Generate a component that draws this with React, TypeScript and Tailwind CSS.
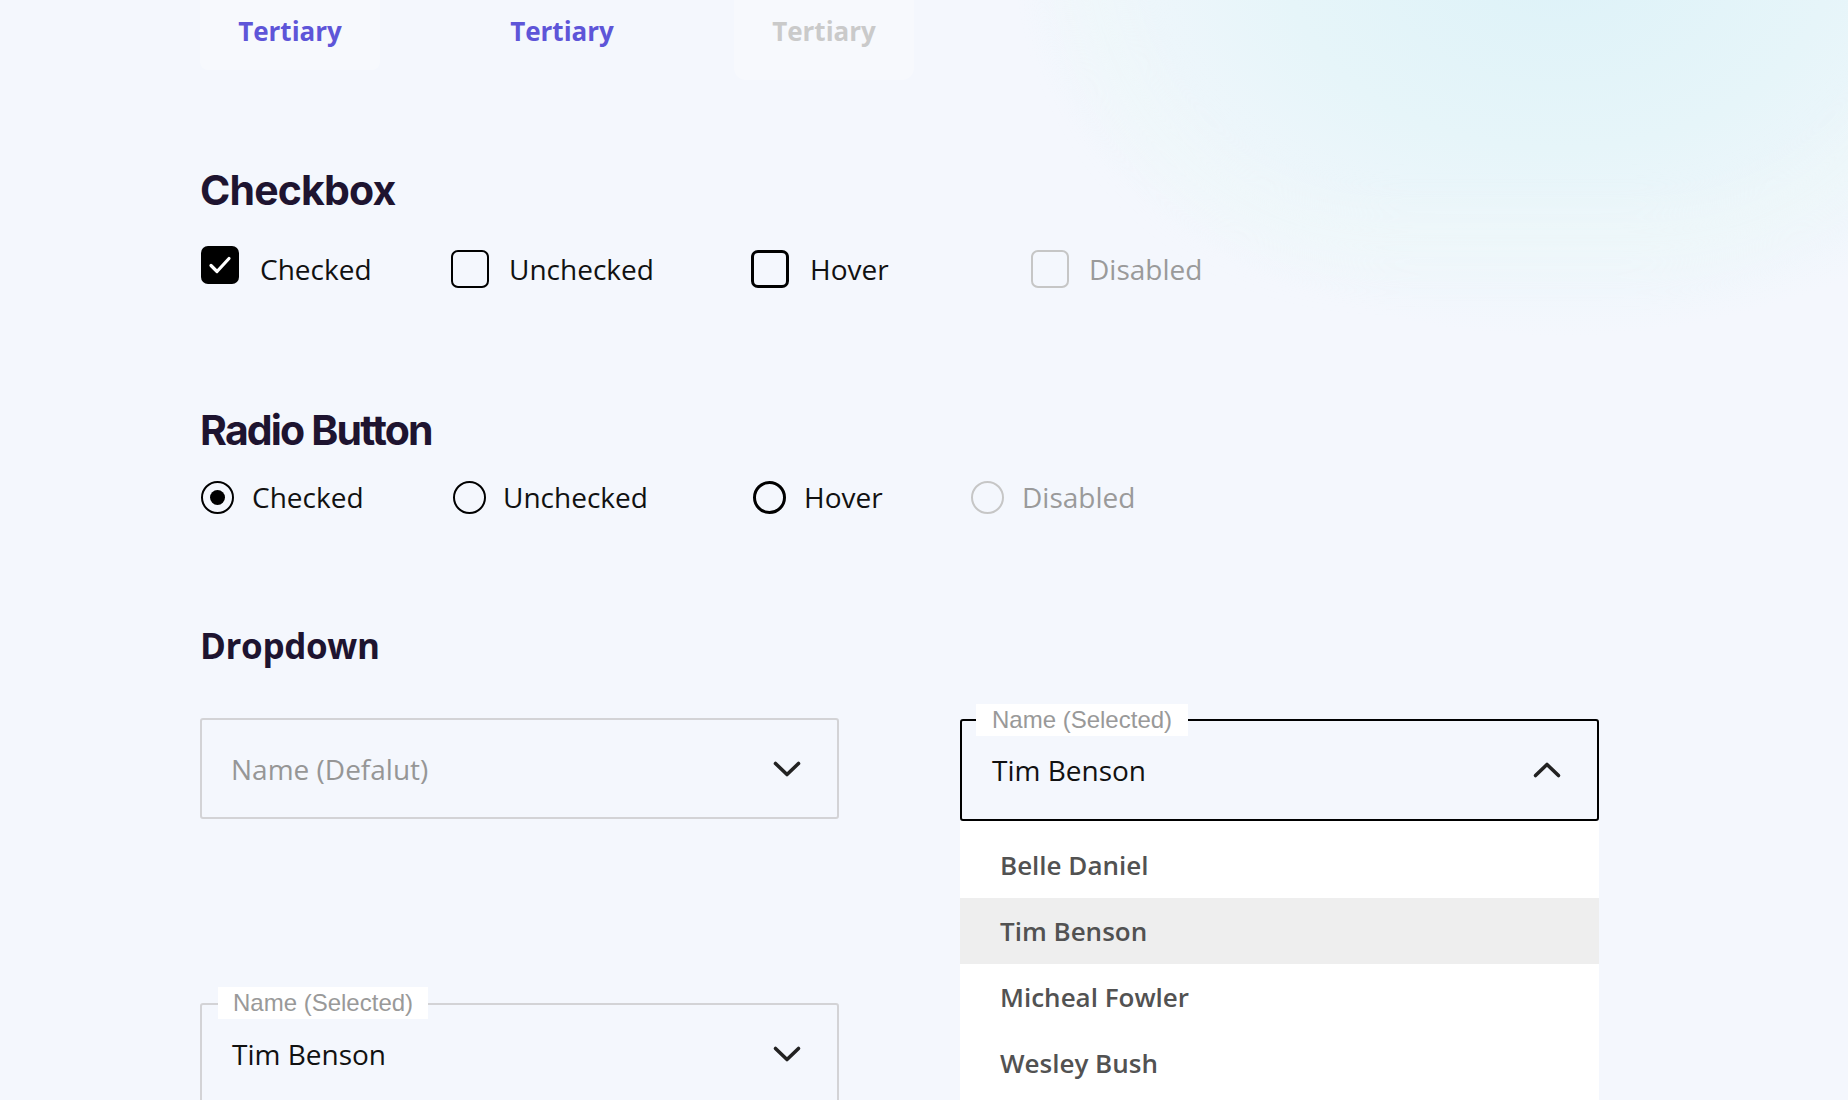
import React from "react";

const OPEN = { fontFamily: '"Open Sans", "Noto Sans", sans-serif' };
const INTER = { fontFamily: 'Inter, "Noto Sans", sans-serif' };
const ARIAL = { fontFamily: '"Liberation Sans", Arial, sans-serif' };

function ChevronDown() {
  return (
    <svg width="30" height="18" viewBox="0 0 30 18" fill="none">
      <path d="M3.5 3.5 L15 14.5 L26.5 3.5" stroke="#222" strokeWidth="3.6" strokeLinecap="round" strokeLinejoin="round" />
    </svg>
  );
}
function ChevronUp() {
  return (
    <svg width="30" height="18" viewBox="0 0 30 18" fill="none">
      <path d="M3.5 14.5 L15 3.5 L26.5 14.5" stroke="#222" strokeWidth="3.6" strokeLinecap="round" strokeLinejoin="round" />
    </svg>
  );
}

function Heading({ children, font }: { children: React.ReactNode; font: React.CSSProperties }) {
  return (
    <h2 className="h-[48px] leading-[48px] text-[#1e1430]" style={font}>
      {children}
    </h2>
  );
}

export default function App() {
  return (
    <div className="relative min-h-[1100px] w-full overflow-hidden bg-[#f4f7fd]" style={OPEN}>
      {/* decorative background glow */}
      <div className="pointer-events-none absolute right-[-260px] top-[-420px] h-[760px] w-[1100px] rounded-full bg-[radial-gradient(ellipse_at_center,#ddf2f8_0%,#e6f5f9_35%,rgba(244,247,253,0)_70%)]" />
      <div className="pointer-events-none absolute right-[-120px] top-[-380px] h-[640px] w-[900px] rounded-full border-[40px] border-[#eef8f8]/60 blur-xl" />

      <div className="relative pl-[200px]">
        {/* Tertiary buttons */}
        <div className="flex h-[80px] items-start">
          <div className="flex h-[70px] w-[180px] justify-center rounded-b-lg bg-white/30 pt-[13px]">
            <span className="text-[26px] font-bold leading-[36px] text-[#5e55d8]">Tertiary</span>
          </div>
          <div className="ml-[92px] flex h-[70px] w-[180px] justify-center pt-[13px]">
            <span className="text-[26px] font-bold leading-[36px] text-[#5e55d8]">Tertiary</span>
          </div>
          <div className="ml-[82px] flex h-[80px] w-[180px] justify-center rounded-b-xl bg-white/30 pt-[13px]">
            <span className="text-[26px] font-bold leading-[36px] text-[#cacaca]">Tertiary</span>
          </div>
        </div>

        {/* Checkbox */}
        <div className="mt-[86px]">
          <Heading font={INTER}>
            <span className="text-[41px] font-bold tracking-[-0.02em]">Checkbox</span>
          </Heading>
        </div>
        <div className="mt-[35px] flex h-[40px] items-center">
          <div className="flex w-[251px] items-center">
            <div className="ml-[1px] flex h-[38px] w-[38px] -translate-y-1 items-center justify-center rounded-[7px] bg-black">
              <svg width="24" height="20" viewBox="0 0 24 20" fill="none">
                <path d="M3 10.5 L9 16.5 L21 3.5" stroke="#fff" strokeWidth="3.2" strokeLinecap="round" strokeLinejoin="round" />
              </svg>
            </div>
            <span className="ml-[21px] text-[28px] leading-[40px] text-[#111]">Checked</span>
          </div>
          <div className="flex w-[300px] items-center">
            <div className="h-[38px] w-[38px] rounded-[7px] border-2 border-black" />
            <span className="ml-[20px] text-[28px] leading-[40px] text-[#111]">Unchecked</span>
          </div>
          <div className="flex w-[280px] items-center">
            <div className="h-[38px] w-[38px] rounded-[7px] border-[3.5px] border-black" />
            <span className="ml-[21px] text-[28px] leading-[40px] text-[#111]">Hover</span>
          </div>
          <div className="flex items-center">
            <div className="h-[38px] w-[38px] rounded-[7px] border-2 border-[#c6c6c6]" />
            <span className="ml-[20px] text-[28px] leading-[40px] text-[#9a9a9a]">Disabled</span>
          </div>
        </div>

        {/* Radio */}
        <div className="mt-[117px]">
          <Heading font={INTER}>
            <span className="text-[41px] font-bold tracking-[-0.045em]">Radio Button</span>
          </Heading>
        </div>
        <div className="mt-[23px] flex h-[40px] items-center">
          <div className="flex w-[253px] items-center">
            <div className="ml-[1px] flex h-[33px] w-[33px] items-center justify-center rounded-full border-2 border-black">
              <div className="h-[15px] w-[15px] rounded-full bg-black" />
            </div>
            <span className="ml-[18px] text-[28px] leading-[40px] text-[#111]">Checked</span>
          </div>
          <div className="flex w-[300px] items-center">
            <div className="h-[33px] w-[33px] rounded-full border-2 border-black" />
            <span className="ml-[17px] text-[28px] leading-[40px] text-[#111]">Unchecked</span>
          </div>
          <div className="flex w-[218px] items-center">
            <div className="h-[33px] w-[33px] rounded-full border-[3.5px] border-black" />
            <span className="ml-[18px] text-[28px] leading-[40px] text-[#111]">Hover</span>
          </div>
          <div className="flex items-center">
            <div className="h-[33px] w-[33px] rounded-full border-2 border-[#c6c6c6]" />
            <span className="ml-[18px] text-[28px] leading-[40px] text-[#9a9a9a]">Disabled</span>
          </div>
        </div>

        {/* Dropdown */}
        <div className="mt-[105px]">
          <Heading font={OPEN}>
            <span className="text-[35px] font-bold tracking-[-0.01em]">Dropdown</span>
          </Heading>
        </div>
        <div className="mt-[48px] flex gap-[121px]">
          {/* left column */}
          <div className="flex w-[639px] flex-col">
            <div className="flex h-[101px] items-center justify-between rounded-[3px] border-2 border-[#d3d3d6] pl-[29px] pr-[35px]">
              <span className="text-[28px] text-[#969696]">Name (Defalut)</span>
              <ChevronDown />
            </div>
            <div className="relative mt-[184px] flex h-[101px] items-center justify-between rounded-[3px] border-2 border-[#d3d3d6] pl-[30px] pr-[35px]">
              <span className="absolute left-[16px] top-[-18px] bg-white px-[15px] text-[24px] leading-[32px] text-[#999]" style={ARIAL}>
                Name (Selected)
              </span>
              <span className="text-[28px] text-[#111]">Tim Benson</span>
              <ChevronDown />
            </div>
          </div>

          {/* right column */}
          <div className="flex w-[639px] flex-col">
            <div className="relative mt-[1px] flex h-[102px] items-center justify-between rounded-[3px] border-2 border-black pl-[30px] pr-[35px]">
              <span className="absolute left-[14px] top-[-17px] bg-white px-[16px] text-[24px] leading-[32px] text-[#999]" style={ARIAL}>
                Name (Selected)
              </span>
              <span className="text-[28px] text-[#111]">Tim Benson</span>
              <ChevronUp />
            </div>
            <div className="flex flex-col bg-white pb-[20px] pt-[11px]">
              {["Belle Daniel", "Tim Benson", "Micheal Fowler", "Wesley Bush"].map((n) => (
                <div
                  key={n}
                  className={
                    "flex h-[66px] items-center pl-[40px] text-[26px] font-semibold text-[#525252] " +
                    (n === "Tim Benson" ? "bg-[#eeeeee]" : "")
                  }
                >
                  {n}
                </div>
              ))}
            </div>
          </div>
        </div>
      </div>
    </div>
  );
}
